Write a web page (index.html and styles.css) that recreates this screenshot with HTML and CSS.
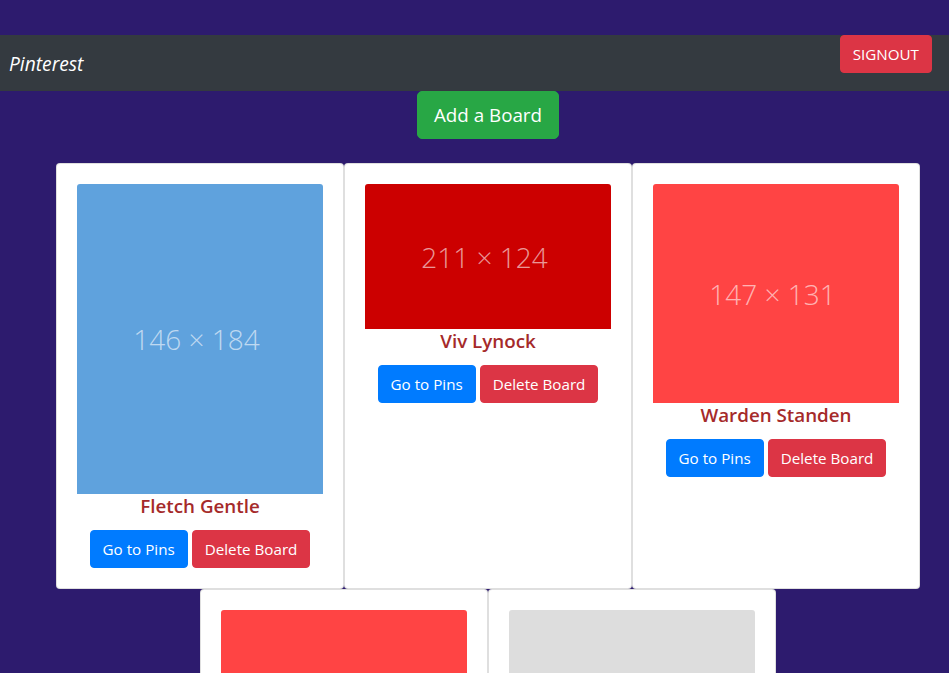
FILE: index.html
```html
<!DOCTYPE html>
<html lang="en">
<head>
<meta charset="utf-8">
<title>Pinterest</title>
<link rel="stylesheet" href="styles.css">
</head>
<body>
<div class="top-space"></div>
<nav class="navbar">
  <span class="brand">Pinterest</span>
  <button class="btn btn-danger signout">SIGNOUT</button>
</nav>
<main class="content">
  <button class="btn btn-success btn-lg">Add a Board</button>
  <div class="boards">
    <div class="card">
      <div class="ph ph-blue" style="height:310px"><span>146 × 184</span></div>
      <h5 class="title">Fletch Gentle</h5>
      <div class="actions">
        <button class="btn btn-primary">Go to Pins</button>
        <button class="btn btn-danger">Delete Board</button>
      </div>
    </div>
    <div class="card">
      <div class="ph ph-dark-red" style="height:145px"><span>211 × 124</span></div>
      <h5 class="title">Viv Lynock</h5>
      <div class="actions">
        <button class="btn btn-primary">Go to Pins</button>
        <button class="btn btn-danger">Delete Board</button>
      </div>
    </div>
    <div class="card">
      <div class="ph ph-red" style="height:219px"><span>147 × 131</span></div>
      <h5 class="title">Warden Standen</h5>
      <div class="actions">
        <button class="btn btn-primary">Go to Pins</button>
        <button class="btn btn-danger">Delete Board</button>
      </div>
    </div>
    <div class="card">
      <div class="ph ph-red" style="height:200px"><span>200 × 163</span></div>
      <h5 class="title">Board</h5>
      <div class="actions">
        <button class="btn btn-primary">Go to Pins</button>
        <button class="btn btn-danger">Delete Board</button>
      </div>
    </div>
    <div class="card">
      <div class="ph ph-gray" style="height:200px"><span>200 × 163</span></div>
      <h5 class="title">Board</h5>
      <div class="actions">
        <button class="btn btn-primary">Go to Pins</button>
        <button class="btn btn-danger">Delete Board</button>
      </div>
    </div>
  </div>
</main>
</body>
</html>
```

FILE: styles.css
```css
* { box-sizing: border-box; }
html, body { margin: 0; padding: 0; }
body {
  background: #2d1b6e;
  font-family: "Segoe UI", "Open Sans", "Noto Sans", sans-serif;
  font-size: 16px;
  line-height: 1.5;
  color: #212529;
  height: 673px;
  overflow: hidden;
}
.top-space { height: 35px; }
.navbar {
  background: #343a40;
  height: 56px;
  display: flex;
  justify-content: space-between;
  align-items: flex-start;
  padding: 0 17px 0 9px;
}
.brand {
  color: #fff;
  font-style: italic;
  font-size: 19.2px;
  line-height: 30px;
  padding-top: 14px;
}
.btn {
  font-family: inherit;
  font-size: 15.2px;
  line-height: 24px;
  padding: 6px 12px;
  border: 1px solid transparent;
  border-radius: 4px;
  color: #fff;
  cursor: pointer;
}
.btn-danger { background: #dc3545; border-color: #dc3545; }
.btn-primary { background: #007bff; border-color: #007bff; }
.btn-success { background: #28a745; border-color: #28a745; }
.btn-lg {
  font-size: 18.8px;
  line-height: 30px;
  padding: 8px 16px;
  border-radius: 5px;
}
.content {
  margin-left: 27px;
  width: 922px;
  display: flex;
  flex-direction: column;
  align-items: center;
}
.boards {
  margin-top: 24px;
  width: 100%;
  display: flex;
  flex-wrap: wrap;
  justify-content: center;
}
.card {
  width: 288px;
  background: #fff;
  border: 1px solid rgba(0,0,0,.125);
  border-radius: 4px;
  padding: 20px;
  display: flex;
  flex-direction: column;
  align-items: center;
}
.ph {
  width: 246px;
  border-radius: 3px 3px 0 0;
  display: flex;
  align-items: center;
  justify-content: center;
}
.ph span {
  font-family: "Open Sans", sans-serif;
  font-weight: 300;
  font-size: 28px;
  padding-right: 7px;
  color: rgba(255,255,255,.6);
}
.ph-blue { background: #5fa2dd; }
.ph-dark-red { background: #cc0000; }
.ph-red { background: #ff4444; }
.ph-gray { background: #dddddd; }
.title {
  margin: 0 0 12px;
  font-size: 18.8px;
  line-height: 24px;
  font-weight: 600;
  color: #a52a2a;
}
.actions {
  display: flex;
  gap: 4px;
}
```
